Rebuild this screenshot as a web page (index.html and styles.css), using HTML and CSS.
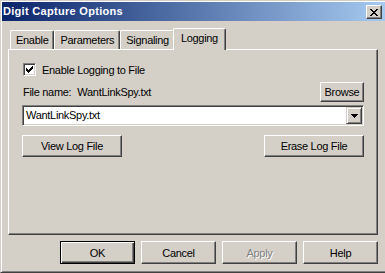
FILE: index.html
```html
<!DOCTYPE html>
<html>
<head>
    <title>Digit Capture Options</title>
    <meta charset="UTF-8">
    <link rel="stylesheet" href="styles.css">
</head>
<body>
    <div class="window">
        <div class="titlebar">
            <span class="title">Digit Capture Options</span>
            <button type="button" class="close-btn">
                <svg width="8" height="7" viewBox="0 0 8 7"><path d="M0 0h2v1H0z M6 0h2v1H6z M1 1h2v1H1z M5 1h2v1H5z M2 2h4v1H2z M3 3h2v1H3z M2 4h4v1H2z M1 5h2v1H1z M5 5h2v1H5z M0 6h2v1H0z M6 6h2v1H6z" fill="#000"/></svg>
            </button>
        </div>

        <div class="tabs">
            <div class="tab">Enable</div>
            <div class="tab">Parameters</div>
            <div class="tab">Signaling</div>
            <div class="tab tab-selected">Logging</div>
        </div>

        <div class="panel">
            <label class="check-row">
                <span class="checkbox">
                    <svg width="7" height="7" viewBox="0 0 7 7"><path d="M6 0h1v1H6z M5 1h2v1H5z M0 2h1v1H0z M4 2h3v1H4z M0 3h2v1H0z M3 3h3v1H3z M0 4h5v1H0z M1 5h3v1H1z M2 6h1v1H2z" fill="#000"/></svg>
                </span>
                Enable Logging to File
            </label>
            <div class="file-row">
                <span class="file-label">File name:</span>
                <span class="file-value">WantLinkSpy.txt</span>
                <button type="button" class="btn btn-browse">Browse</button>
            </div>
            <div class="combo">
                <span class="combo-text">WantLinkSpy.txt</span>
                <span class="combo-arrow">
                    <svg width="7" height="4" viewBox="0 0 7 4"><path d="M0 0h7v1H0z M1 1h5v1H1z M2 2h3v1H2z M3 3h1v1H3z" fill="#000"/></svg>
                </span>
            </div>
            <div class="log-buttons">
                <button type="button" class="btn btn-log">View Log File</button>
                <button type="button" class="btn btn-log">Erase Log File</button>
            </div>
        </div>

        <div class="dialog-buttons">
            <button type="button" class="btn btn-dialog btn-default">OK</button>
            <button type="button" class="btn btn-dialog">Cancel</button>
            <button type="button" class="btn btn-dialog btn-disabled">Apply</button>
            <button type="button" class="btn btn-dialog">Help</button>
        </div>
    </div>
</body>
</html>
```

FILE: styles.css
```css
body {
    margin: 0;
    overflow: hidden;
    background: #d4d0c8;
}
.window {
    width: 385px;
    height: 273px;
    box-sizing: border-box;
    background: #d4d0c8;
    border-top: 1px solid #d4d0c8;
    border-left: 1px solid #d4d0c8;
    border-bottom: 1px solid #404040;
    box-shadow: inset 1px 1px #fff, inset 0 -1px #808080;
    padding: 1px 0 0 1px;
    font-family: "Liberation Sans", Arial, sans-serif;
    font-size: 11px;
    letter-spacing: -0.3px;
    color: #000;
}
.titlebar {
    height: 19px;
    display: flex;
    align-items: flex-start;
    justify-content: space-between;
    background: linear-gradient(to right, #0a246a, #a6caf0);
}
.title {
    color: #fff;
    font-weight: bold;
    letter-spacing: 0.3px;
    line-height: 19px;
    padding-left: 1px;
}
.close-btn {
    width: 16px;
    height: 14px;
    margin: 3px 3px 0 0;
    padding: 0;
    display: flex;
    align-items: center;
    justify-content: center;
    background: #d4d0c8;
    border: 1px solid;
    border-color: #fff #404040 #404040 #fff;
    box-shadow: inset -1px -1px #808080;
}
svg {
    display: block;
    shape-rendering: crispEdges;
}

/* tabs */
.tabs {
    height: 21px;
    margin: 7px 0 0 6px;
    padding-left: 2px;
    display: flex;
    align-items: flex-end;
}
.tab {
    height: 19px;
    box-sizing: border-box;
    padding: 0 5px;
    line-height: 18px;
    border-top: 1px solid #fff;
    border-left: 1px solid #fff;
    border-right: 1px solid #404040;
    border-radius: 2px 2px 0 0;
    box-shadow: inset -1px 0 #808080;
    background: #d4d0c8;
}
.tab-selected {
    height: 22px;
    margin: 0 -2px -1px;
    padding: 0 7px;
    position: relative;
    z-index: 1;
}

/* panel */
.panel {
    width: 370px;
    height: 186px;
    box-sizing: border-box;
    margin-left: 6px;
    padding: 13px 13px 0 13px;
    border-top: 1px solid #fff;
    border-left: 1px solid #fff;
    border-right: 1px solid #404040;
    border-bottom: 1px solid #404040;
    box-shadow: inset -1px -1px #808080;
}
.check-row {
    height: 13px;
    display: flex;
    align-items: center;
    gap: 6px;
    padding-left: 1px;
}
.checkbox {
    width: 13px;
    height: 13px;
    box-sizing: border-box;
    background: #fff;
    border: 1px solid;
    border-color: #808080 #fff #fff #808080;
    box-shadow: inset 1px 1px #404040, inset -1px -1px #d4d0c8;
    padding: 2px 0 0 2px;
}
.file-row {
    margin-top: 6px;
    height: 20px;
    display: flex;
    align-items: center;
    padding-left: 1px;
}
.file-value {
    margin-left: 6px;
    flex: 1;
}
.combo {
    margin-top: 3px;
    height: 21px;
    box-sizing: border-box;
    display: flex;
    align-items: stretch;
    background: #fff;
    border: 1px solid;
    border-color: #808080 #fff #fff #808080;
    box-shadow: inset 1px 1px #404040, inset -1px -1px #d4d0c8;
    padding: 1px;
}
.combo-text {
    flex: 1;
    line-height: 17px;
    padding-left: 2px;
}
.combo-arrow {
    width: 16px;
    box-sizing: border-box;
    display: flex;
    align-items: center;
    justify-content: center;
    background: #d4d0c8;
    border: 1px solid;
    border-color: #d4d0c8 #404040 #404040 #d4d0c8;
    box-shadow: inset 1px 1px #fff, inset -1px -1px #808080;
}
.log-buttons {
    margin-top: 9px;
    display: flex;
    justify-content: space-between;
}

/* buttons */
.btn {
    box-sizing: border-box;
    padding: 0;
    background: #d4d0c8;
    border: 1px solid;
    border-color: #fff #404040 #404040 #fff;
    box-shadow: inset -1px -1px #808080;
    font-family: "Liberation Sans", Arial, sans-serif;
    font-size: 11px;
    letter-spacing: -0.3px;
    color: #000;
}
.btn-browse {
    width: 44px;
    height: 20px;
}
.btn-log {
    width: 100px;
    height: 22px;
}
.dialog-buttons {
    width: 370px;
    margin: 6px 0 0 6px;
    display: flex;
    justify-content: flex-end;
    gap: 6px;
}
.btn-dialog {
    width: 75px;
    height: 23px;
}
.btn-default {
    border: 1px solid #000;
    box-shadow: inset 1px 1px #fff, inset -1px -1px #404040, inset -2px -2px #808080;
}
.btn-disabled {
    color: #808080;
    text-shadow: 1px 1px #fff;
}
```
